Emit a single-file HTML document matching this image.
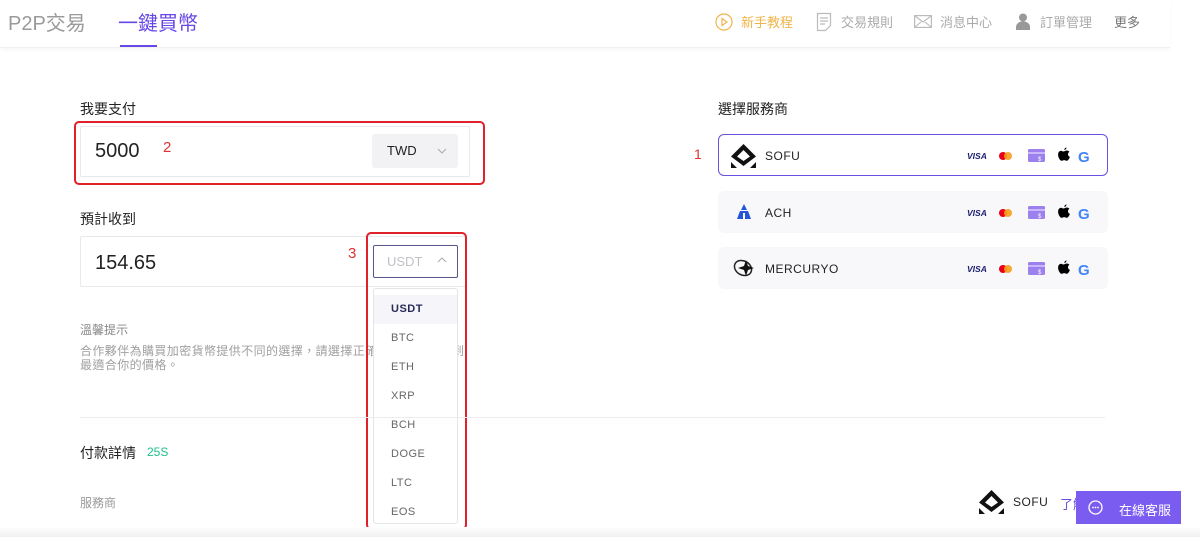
<!DOCTYPE html>
<html><head><meta charset="utf-8"><style>
*{margin:0;padding:0;box-sizing:border-box}
body{width:1200px;height:537px;overflow:hidden;background:#fff;font-family:"Liberation Sans","Noto Sans CJK TC",sans-serif;color:#222;position:relative}
.a{position:absolute;white-space:nowrap}
.nav{font-size:13px;color:#aaa;top:12px}
.card{position:absolute;left:718px;width:390px;height:42px;border-radius:6px;background:#f8f8fa}
.dd div{height:29px;line-height:29px;padding-left:17px;font-size:11px;color:#666;letter-spacing:.5px}
</style></head><body>
<div style="position:absolute;left:0;top:0;width:1170px;height:48px;border-bottom:1px solid #f0f0f0;box-shadow:0 2px 3px rgba(0,0,0,.03)"></div>
<div class="a" style="left:8px;top:7px;font-size:20px;color:#9a9a9a">P2P交易</div>
<div class="a" style="left:118px;top:7px;font-size:20px;color:#6747e6">一鍵買幣</div>
<div class="a" style="left:120px;top:45px;width:37px;height:2px;background:#6747e6"></div>

<svg class="a" style="left:715px;top:13px" width="18" height="18" viewBox="0 0 18 18"><circle cx="9" cy="9" r="8" fill="none" stroke="#f0b44a" stroke-width="1.2"/><path d="M7 5.5L12 9 7 12.5Z" fill="none" stroke="#f0b44a" stroke-width="1.2"/></svg>
<div class="a nav" style="left:741px;color:#f0b44a">新手教程</div>
<svg class="a" style="left:816px;top:12px" width="16" height="20" viewBox="0 0 16 20"><path d="M1.5 1.5h13v12l-5 5h-8z M4 6h8M4 9h8M4 12h5" fill="none" stroke="#bbb" stroke-width="1.2"/></svg>
<div class="a nav" style="left:841px">交易規則</div>
<svg class="a" style="left:914px;top:15px" width="18" height="13" viewBox="0 0 18 13"><rect x=".6" y=".6" width="16.8" height="11.8" fill="none" stroke="#bbb" stroke-width="1.2"/><path d="M1 1l8 6 8-6M1 12l6-5M17 12l-6-5" fill="none" stroke="#bbb" stroke-width="1.1"/></svg>
<div class="a nav" style="left:940px">消息中心</div>
<svg class="a" style="left:1016px;top:13px" width="14" height="17" viewBox="0 0 14 17"><circle cx="7" cy="4.5" r="4" fill="#999"/><path d="M0 17v-3a5 4 0 0 1 14 0v3z" fill="#999"/></svg>
<div class="a nav" style="left:1040px">訂單管理</div>
<div class="a nav" style="left:1114px;color:#777">更多</div>

<div class="a" style="left:80px;top:99px;font-size:14px">我要支付</div>
<div class="a" style="left:74px;top:121px;width:411px;height:64px;border:2px solid #e0202a;border-radius:5px"></div>
<div class="a" style="left:80px;top:126px;width:390px;height:51px;border:1px solid #e9e9ec;border-radius:2px"></div>
<div class="a" style="left:95px;top:140px;font-size:20px">5000</div>
<div class="a" style="left:163px;top:139px;font-size:15px;color:#d33">2</div>
<div class="a" style="left:372px;top:134px;width:86px;height:34px;background:#f2f2f4;border-radius:3px"></div>
<div class="a" style="left:387px;top:143px;font-size:13px">TWD</div>
<svg class="a" style="left:437px;top:148px" width="10" height="6" viewBox="0 0 10 6"><path d="M1 1l4 4 4-4" fill="none" stroke="#aaa"/></svg>

<div class="a" style="left:80px;top:209px;font-size:14px">預計收到</div>
<div class="a" style="left:80px;top:236px;width:386px;height:51px;border:1px solid #e9e9ec;border-radius:2px"></div>
<div class="a" style="left:95px;top:252px;font-size:20px">154.65</div>
<div class="a" style="left:348px;top:245px;font-size:15px;color:#d33">3</div>
<div class="a" style="left:80px;top:321px;font-size:12px;color:#888">溫馨提示</div>
<div class="a" style="left:80px;top:344px;font-size:12px;color:#a0a0a0;line-height:14px;letter-spacing:.4px">合作夥伴為購買加密貨幣提供不同的選擇，請選擇正確的服務商以得到<br>最適合你的價格。</div>
<div class="a" style="left:366px;top:232px;width:101px;height:298px;border:2px solid #e0202a;border-radius:5px"></div>
<div class="a" style="left:373px;top:245px;width:85px;height:33px;border:1.5px solid #55578a;border-radius:2px;background:#fff"></div>
<div class="a" style="left:387px;top:254px;font-size:13px;color:#c0c0c8">USDT</div>
<svg class="a" style="left:437px;top:257px" width="10" height="6" viewBox="0 0 10 6"><path d="M1 5l4-4 4 4" fill="none" stroke="#aaa"/></svg>
<div class="a dd" style="left:373px;top:288px;width:85px;height:236px;border:1px solid #e5e5e8;border-radius:3px;background:#fff;padding-top:6px;overflow:hidden">
<div style="background:#f6f6fa;color:#2a2a5a;font-weight:bold">USDT</div><div>BTC</div><div>ETH</div><div>XRP</div><div>BCH</div><div>DOGE</div><div>LTC</div><div>EOS</div></div>

<div class="a" style="left:80px;top:417px;width:1025px;height:1px;background:#ececec"></div>
<div class="a" style="left:80px;top:443px;font-size:14px">付款詳情</div>
<div class="a" style="left:147px;top:445px;font-size:12px;color:#1cc28a">25S</div>
<div class="a" style="left:80px;top:494px;font-size:12px;color:#999">服務商</div>

<div class="a" style="left:718px;top:99px;font-size:14px">選擇服務商</div>
<div class="a" style="left:694px;top:146px;font-size:14px;color:#d33">1</div>

<div class="card" style="top:134px;background:#fff;border:1.5px solid #6a4fe0"></div>
<div class="card" style="top:191px"></div>
<div class="card" style="top:247px"></div>
<svg class="a" style="left:730px;top:143px" width="27" height="26" viewBox="0 0 27 26"><path d="M13.5 1L26 13.5 13.5 23 1 13.5Z M13.5 7L7 13.5 13.5 18 20 13.5Z" fill="#111" fill-rule="evenodd"/><path d="M1 19l6 6H1zM26 19l-6 6h6z" fill="#111"/></svg>
<div class="a" style="left:765px;top:149px;font-size:12px;letter-spacing:.5px">SOFU</div>
<svg class="a" style="left:735px;top:203px" width="18" height="18" viewBox="0 0 18 18"><path d="M9 1l3 6H6z M5 8h8l3 8H2z" fill="#2456d6"/><path d="M8 10h2v6H8z" fill="#fff"/></svg>
<div class="a" style="left:765px;top:206px;font-size:12px;letter-spacing:.5px">ACH</div>
<svg class="a" style="left:732px;top:257px" width="24" height="22" viewBox="0 0 24 22"><ellipse cx="11" cy="11" rx="9" ry="7" fill="none" stroke="#222" stroke-width="1.5" transform="rotate(30 11 11)"/><path d="M14 3l2 6 6 2-6 2-2 6-2-6-6-2 6-2z" fill="#111"/></svg>
<div class="a" style="left:765px;top:262px;font-size:12px;letter-spacing:.5px">MERCURYO</div>

<svg class="a" style="left:960px;top:140px" width="140" height="150" viewBox="0 0 140 150">
<g id="r"><text x="7" y="19" font-family="Liberation Sans" font-size="8.5" font-weight="bold" font-style="italic" fill="#1a1f71">VISA</text>
<circle cx="43" cy="16" r="4" fill="#eb001b"/><circle cx="48" cy="16" r="4" fill="#f79e1b" opacity=".9"/>
<rect x="68" y="9" width="17" height="13" rx="1.5" fill="#9b80ee"/><rect x="68" y="12" width="17" height="2" fill="#c8b8fa"/><text x="78" y="21" font-size="6" fill="#fff" font-family="Liberation Sans">$</text>
<path d="M103 11.5c1.8 0 2.4-1 3.8-1 1.2 0 2.1.7 2.6 1.4-2.1 1.2-1.8 4.2.5 5-.5 1.5-1.7 3.9-3.1 3.9-1 0-1.3-.7-2.6-.7s-1.6.7-2.6.7c-1.5 0-3.5-3.3-3.5-6.2 0-2.4 1.5-3.8 3-3.8.9 0 1.3.7 1.9.7zM106.5 7.5c0 1.2-1 2.4-2.2 2.4 0-1.2 1-2.4 2.2-2.4z" fill="#000"/>
<text x="118" y="22" font-family="Liberation Sans" font-size="15" font-weight="bold" fill="#4285f4">G</text></g>
<use href="#r" y="57"/><use href="#r" y="113"/>
</svg>

<svg class="a" style="left:978px;top:489px" width="27" height="26" viewBox="0 0 27 26"><path d="M13.5 1L26 13.5 13.5 23 1 13.5Z M13.5 7L7 13.5 13.5 18 20 13.5Z" fill="#111" fill-rule="evenodd"/><path d="M1 19l6 6H1zM26 19l-6 6h6z" fill="#111"/></svg>
<div class="a" style="left:1013px;top:495px;font-size:12px;letter-spacing:.5px">SOFU</div>
<div class="a" style="left:1060px;top:494px;font-size:13px;color:#6a4fe0">了解</div>
<div class="a" style="left:1076px;top:491px;width:105px;height:33px;background:#7b5cf0"></div>
<svg class="a" style="left:1088px;top:500px" width="15" height="15" viewBox="0 0 15 15"><circle cx="7.5" cy="7.5" r="6.5" fill="none" stroke="#fff" stroke-width="1.3"/><circle cx="5" cy="7.5" r=".9" fill="#fff"/><circle cx="7.5" cy="7.5" r=".9" fill="#fff"/><circle cx="10" cy="7.5" r=".9" fill="#fff"/></svg>
<div class="a" style="left:1119px;top:500px;font-size:13px;color:#fff">在線客服</div>
<div class="a" style="left:0;top:527px;width:1200px;height:10px;background:linear-gradient(#fff,#f0f0f0)"></div>
</body></html>
